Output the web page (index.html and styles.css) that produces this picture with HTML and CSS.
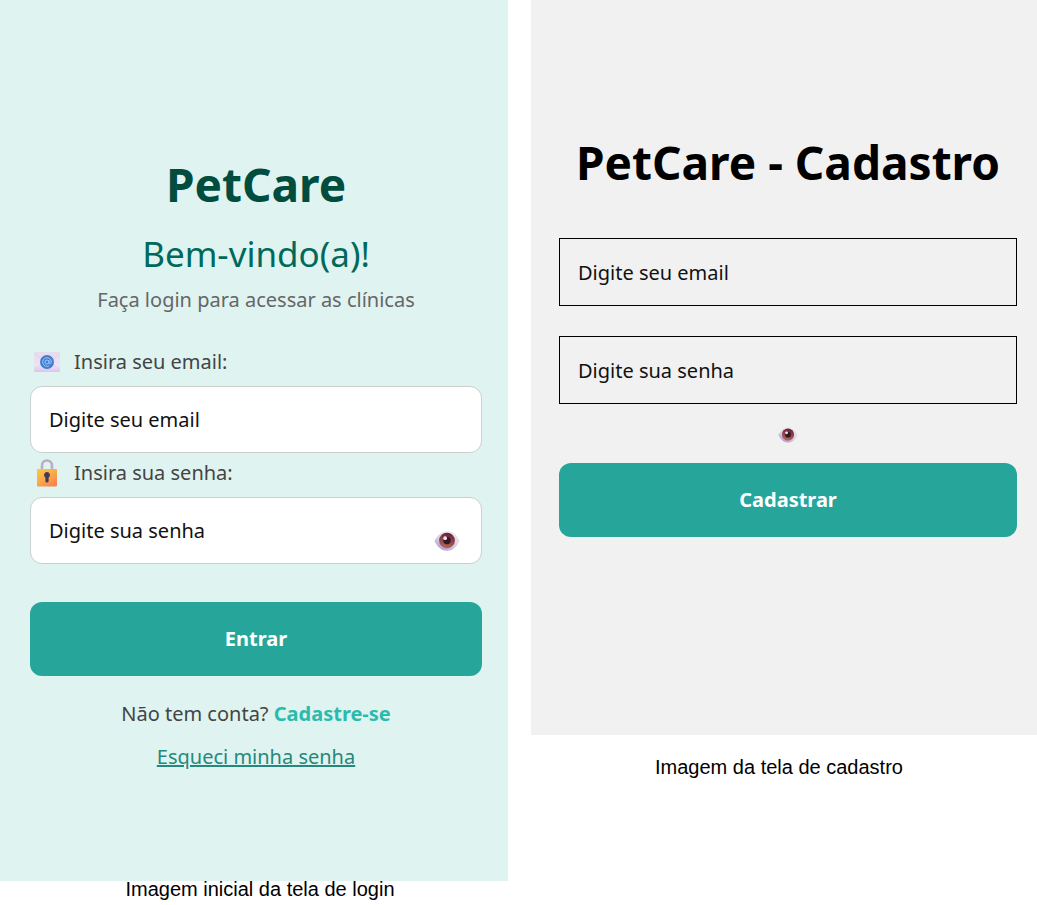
FILE: index.html
```html
<!DOCTYPE html>
<html lang="pt-BR">
<head>
<meta charset="utf-8">
<meta name="viewport" content="width=device-width, initial-scale=1">
<title>PetCare</title>
<link rel="stylesheet" href="styles.css">
</head>
<body>
<svg class="defs" aria-hidden="true">
  <defs>
    <linearGradient id="g-ball" x1="0" y1="1" x2="0.7" y2="0">
      <stop offset="0" stop-color="#a084d8"/><stop offset="0.5" stop-color="#d6cfe2"/><stop offset="1" stop-color="#ebe9ec"/>
    </linearGradient>
    <linearGradient id="g-iris" x1="0.6" y1="0" x2="0.4" y2="1">
      <stop offset="0" stop-color="#6a1c3c"/><stop offset="1" stop-color="#b56a58"/>
    </linearGradient>
    <linearGradient id="g-lock" x1="0" y1="0" x2="0.7" y2="1">
      <stop offset="0" stop-color="#fcc941"/><stop offset="0.5" stop-color="#fbac48"/><stop offset="1" stop-color="#f98652"/>
    </linearGradient>
    <linearGradient id="g-mail" x1="0" y1="0" x2="0" y2="1">
      <stop offset="0" stop-color="#e6dcee"/><stop offset="0.7" stop-color="#ece2f3"/><stop offset="1" stop-color="#dcc2f2"/>
    </linearGradient>
    <symbol id="eye" viewBox="0 0 28 22">
      <path d="M0.5 11C4 4 9 0.5 14.500 0.500S24.500 4 27.500 11C24.500 18 19.500 21.500 14 21.500S4 18 0.500 11Z" fill="url(#g-ball)"/>
      <circle cx="14" cy="10.500" r="8.500" fill="url(#g-iris)"/>
      <circle cx="14" cy="10.500" r="4" fill="#301825"/>
      <circle cx="12" cy="8" r="2" fill="#f3e6ea"/>
    </symbol>
  </defs>
</svg>
<main class="board">
  <figure class="shot">
    <section class="screen screen-login">
      <h1 class="brand">PetCare</h1>
      <h2 class="welcome">Bem-vindo(a)!</h2>
      <p class="hint">Faça login para acessar as clínicas</p>
      <form class="login-form">
        <label class="label" for="login-email">
          <svg class="label-icon" viewBox="0 0 28 28" aria-hidden="true">
            <rect x="1" y="4" width="26" height="20" rx="1" fill="url(#g-mail)"/>
            <path d="M1 5l13 12L27 5M1 23l9-9M27 23l-9-9" fill="none" stroke="#d9cfe3" stroke-width="0.800"/>
            <circle cx="14" cy="14" r="7" fill="#3f7fd4"/>
            <circle cx="14" cy="14" r="2" fill="none" stroke="#a9c5ec" stroke-width="1"/>
            <path d="M16 12v3c0 1.500 2.300 1.300 2.300-1A4.300 4.300 0 1 0 16 17.800" fill="none" stroke="#a9c5ec" stroke-width="1"/>
          </svg>
          Insira seu email:
        </label>
        <input class="field" id="login-email" type="email" placeholder="Digite seu email">
        <label class="label" for="login-pass">
          <svg class="label-icon" viewBox="0 0 28 28" aria-hidden="true">
            <path d="M9 12V6.500a5 5 0 0 1 10 0V12" fill="none" stroke="#b9aec4" stroke-width="2.600"/>
            <rect x="4" y="10" width="20" height="17.500" rx="1" fill="url(#g-lock)"/>
            <path d="M14 13a3 3 0 0 1 1.600 5.500V22a1.600 1.600 0 0 1-3.200 0V18.500A3 3 0 0 1 14 13Z" fill="#443a56"/>
          </svg>
          Insira sua senha:
        </label>
        <div class="password">
          <input class="field" id="login-pass" type="password" placeholder="Digite sua senha">
          <button class="reveal reveal-inside" type="button" aria-label="Mostrar senha"><svg class="eye"><use href="#eye"/></svg></button>
        </div>
        <button class="submit" type="submit">Entrar</button>
      </form>
      <p class="signup">Não tem conta? <a class="signup-link" href="#cadastro">Cadastre-se</a></p>
      <a class="forgot" href="#senha">Esqueci minha senha</a>
    </section>
    <figcaption class="caption caption-login">Imagem inicial da tela de login</figcaption>
  </figure>
  <figure class="shot">
    <section class="screen screen-register" id="cadastro">
      <h1 class="brand">PetCare - Cadastro</h1>
      <form class="register-form">
        <input class="field field-square" type="email" aria-label="Email" placeholder="Digite seu email">
        <input class="field field-square" type="password" aria-label="Senha" placeholder="Digite sua senha">
        <button class="reveal" type="button" aria-label="Mostrar senha"><svg class="eye eye-small"><use href="#eye"/></svg></button>
        <button class="submit" type="submit">Cadastrar</button>
      </form>
    </section>
    <figcaption class="caption caption-register">Imagem da tela de cadastro</figcaption>
  </figure>
</main>
</body>
</html>
```
FILE: styles.css
```css
* { box-sizing: border-box; }

body {
  margin: 0;
  background: #fff;
  font-family: "Noto Sans", "Open Sans", sans-serif;
  font-size: 20px;
  line-height: 28px;
}

h1, h2, p, figure { margin: 0; }

.defs { position: absolute; width: 0; height: 0; }

.board {
  display: grid;
  grid-template-columns: 254fr 253fr;
  column-gap: 23px;
  align-items: start;
}

.screen {
  display: flex;
  flex-direction: column;
}

.screen-login {
  padding: 154px 26px 110px 30px;
  background: #dff3f0;
  text-align: center;
}

.screen-register {
  padding: 132px 20px 198px 28px;
  background: #f1f1f1;
}

.brand {
  font-size: 46px;
  line-height: 60px;
  font-weight: 700;
  text-align: center;
  white-space: nowrap;
}

.screen-login .brand { color: #004d40; }

.welcome {
  margin-top: 16px;
  color: #00695c;
  font-size: 35px;
  line-height: 48px;
  font-weight: 400;
}

.hint {
  margin-top: 8px;
  color: #666;
}

.login-form {
  display: flex;
  flex-direction: column;
  margin-top: 32px;
}

.label {
  display: flex;
  align-items: center;
  gap: 13px;
  padding: 2px 3px 10px;
  color: #444;
}

.label + .field + .label { padding-top: 6px; }

.label-icon { width: 28px; height: 28px; }

.field {
  display: block;
  width: 100%;
  height: 67px;
  padding: 0 18px;
  border: 1px solid #cbd0cf;
  border-radius: 12px;
  background: #fff;
  color: #111;
  font: inherit;
}

.field::placeholder { color: #111; opacity: 1; }

.field-square {
  height: 68px;
  border-color: #000;
  border-radius: 0;
  background: transparent;
}

.password { position: relative; }

.reveal {
  display: flex;
  justify-content: center;
  padding: 0;
  border: 0;
  background: none;
}

.reveal-inside {
  position: absolute;
  right: 22px;
  bottom: 12px;
}

.eye { width: 26px; height: 22px; }
.eye-small { width: 20px; height: 16px; }

.submit {
  padding: 23px;
  border: 0;
  border-radius: 12px;
  background: #26a69a;
  color: #fff;
  font: inherit;
  font-weight: 700;
}

.login-form .submit { margin-top: 38px; }

.signup {
  margin-top: 24px;
  color: #444;
}

.signup-link {
  color: #2bbbad;
  font-weight: 700;
  text-decoration: none;
}

.forgot {
  align-self: center;
  margin-top: 15px;
  color: #24897c;
}

.register-form {
  display: flex;
  flex-direction: column;
  margin-top: 46px;
}

.field-square + .field-square { margin-top: 30px; }
.register-form .reveal { align-self: center; margin: 23px 0 20px; }

.caption {
  color: #000;
  font-family: "Liberation Sans", Arial, sans-serif;
  font-size: 20px;
  line-height: 24px;
  text-align: center;
}

.caption-login { padding: 0 0 0 12px; margin-top: -4px; }
.caption-register { padding: 20px 10px 0 0; }
```
